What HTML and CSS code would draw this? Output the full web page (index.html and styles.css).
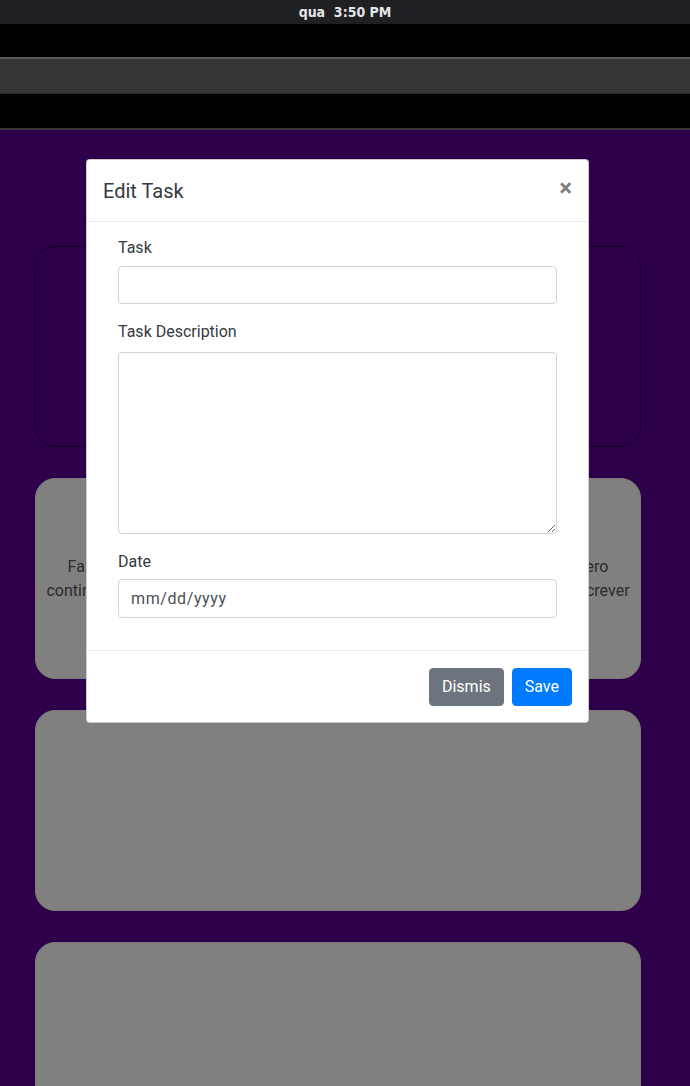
FILE: index.html
```html
<!DOCTYPE html>
<html lang="pt">
<head>
<meta charset="utf-8">
<title>Tasks</title>
<link rel="stylesheet" href="styles.css">
</head>
<body>
<div class="sysbar">qua&nbsp; 3:50 PM</div>
<div class="chrome">
  <div class="chrome-black"></div>
  <div class="chrome-tabbar"></div>
  <div class="chrome-black chrome-bottom"></div>
</div>
<main class="page">
  <section class="card card-outline"></section>
  <section class="card card-gray">
    <p class="card-text">Fazer a página de edição das tarefas, ajustar o modal e fazer o que eu quero<br>continuar a desenvolver o projetos de lista de tarefas e depois começar a escrever</p>
  </section>
  <section class="card card-gray"></section>
  <section class="card card-gray"></section>
</main>

<div class="modal">
  <div class="modal-header">
    <h5 class="modal-title">Edit Task</h5>
    <button class="close" type="button">&times;</button>
  </div>
  <div class="modal-body">
    <form class="task-form">
      <div class="form-group">
        <label class="label label-first">Task</label>
        <input class="form-control" type="text">
      </div>
      <div class="form-group">
        <label class="label">Task Description</label>
        <textarea class="form-control textarea"></textarea>
      </div>
      <div class="form-group">
        <label class="label label-date">Date</label>
        <input class="form-control date" type="text" placeholder="mm/dd/yyyy">
      </div>
    </form>
  </div>
  <div class="modal-footer">
    <button class="btn btn-secondary" type="button">Dismis</button>
    <button class="btn btn-primary" type="button">Save</button>
  </div>
</div>
</body>
</html>
```
FILE: styles.css
```css
* { box-sizing: border-box; }
html, body { margin: 0; padding: 0; }
body {
  background: #2e004a;
  font-family: Roboto, "Liberation Sans", sans-serif;
  width: 690px;
  height: 1086px;
  overflow: hidden;
  position: relative;
}
.sysbar {
  height: 24px;
  background: #1e2023;
  color: #e6e6e6;
  font-family: "DejaVu Sans Condensed", "DejaVu Sans", sans-serif;
  font-weight: bold;
  font-size: 14px;
  line-height: 24px;
  text-align: center;
}
.chrome { display: flex; flex-direction: column; }
.chrome-black { height: 33px; background: #000; }
.chrome-tabbar {
  height: 37px;
  background: #353535;
  border-top: 2px solid #595959;
  border-bottom: 1px solid #2a2a2a;
}
.chrome-bottom { height: 36px; border-bottom: 2px solid #3a3a3a; }

.page {
  display: flex;
  flex-direction: column;
  gap: 31px;
  padding: 116px 49px 0 35px;
}
.card {
  height: 201px;
  border-radius: 20px;
  display: flex;
  align-items: center;
  justify-content: center;
}
.card-outline { border: 1px solid #14002a; }
.card-gray { background: #808080; border: 1px solid #7a7a7a; }
.card-text {
  margin: 0;
  color: #2b2b2b;
  font-size: 16px;
  line-height: 24px;
  text-align: center;
  white-space: nowrap;
}

.modal {
  position: absolute;
  left: 86px;
  top: 159px;
  width: 503px;
  background: #fff;
  border: 1px solid rgba(0,0,0,.2);
  border-radius: 4px;
  color: #212529;
}
.modal-header {
  display: flex;
  align-items: flex-start;
  padding: 16px 16px 15px 16px;
  border-bottom: 1px solid #e9ecef;
}
.modal-title {
  margin: 0;
  font-size: 20px;
  font-weight: 400;
  line-height: 30px;
  color: #343a40;
}
.close {
  margin: -16px -16px -16px auto;
  padding: 16px;
  background: transparent;
  border: 0;
  font-family: Roboto, sans-serif;
  font-size: 24px;
  font-weight: 700;
  line-height: 1;
  color: #000;
  opacity: .5;
}
.modal-body { padding: 16px; }
.task-form { padding: 0 15px; }
.form-group { display: flex; flex-direction: column; margin-bottom: 16px; }
.label {
  font-size: 16px;
  line-height: 24px;
  color: #343a40;
  margin-bottom: 8px;
}
.label-first { margin-top: -2px; margin-bottom: 6px; }
.label-date { margin-bottom: 5px; }
.form-control {
  width: 100%;
  height: 38px;
  padding: 6px 12px;
  font-family: Roboto, sans-serif;
  font-size: 16px;
  color: #495057;
  background: #fff;
  border: 1px solid #ced4da;
  border-radius: 4px;
  outline: none;
}
.textarea { height: 182px; resize: vertical; display: block; }
.date { height: 39px; letter-spacing: 0.6px; }
.date::placeholder { color: #495057; opacity: 1; }
.modal-footer {
  display: flex;
  justify-content: flex-end;
  align-items: center;
  padding: 13px 12px 12px 12px;
  border-top: 1px solid #e9ecef;
}
.btn {
  margin: 4px;
  padding: 6px 12px;
  font-family: Roboto, sans-serif;
  font-size: 16px;
  line-height: 24px;
  border-radius: 4px;
  border: 1px solid transparent;
  color: #fff;
}
.btn-secondary { background: #6c757d; border-color: #6c757d; }
.btn-primary { background: #007bff; border-color: #007bff; }
```
